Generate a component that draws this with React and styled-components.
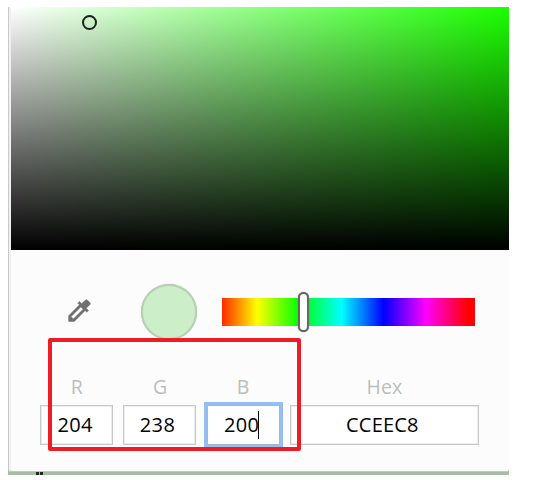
import React from 'react';
import styled, { createGlobalStyle, css } from 'styled-components';

const GlobalStyle = createGlobalStyle`
  * { box-sizing: border-box; }
  body { margin: 0; background: #fff; font-family: "Open Sans", "Noto Sans", sans-serif; }
`;

const Page = styled.main`
  position: relative;
  width: 554px;
  height: 480px;
  padding: 7px 0 0 8px;
  overflow: hidden;
`;

const Backdrop = styled.div`
  width: 501px;
  height: 468px;
  background: #a6bea4;
  overflow: hidden;
`;

const Panel = styled.section`
  width: 501px;
  height: 465px;
  display: flex;
  flex-direction: column;
  background: #fcfcfc;
  border-left: 1px solid #c9c9c9;
  border-bottom: 1px solid #c4c8c4;
  border-radius: 0 0 3px 3px;
  box-shadow: inset 2px 0 0 #f0f0f0;
`;

const Spectrum = styled.div`
  position: relative;
  height: 243px;
  margin-left: 2px;
  flex: none;
  background:
    linear-gradient(to top, #000, transparent),
    linear-gradient(to right, #fff, #1bff00);
`;

const Picker = styled.span`
  position: absolute;
  left: 71px;
  top: 8px;
  width: 15px;
  height: 15px;
  border: 2px solid #1c241b;
  border-radius: 50%;
`;

const Controls = styled.div`
  height: 56px;
  margin-top: 34px;
  padding-left: 55px;
  flex: none;
  display: flex;
  align-items: center;
`;

const Dropper = styled.svg`
  width: 29px;
  height: 29px;
  margin: -4px 0 0 1px;
  fill: #707070;
  stroke: #707070;
  stroke-width: 0.4;
`;

const Swatch = styled.div`
  width: 56px;
  height: 56px;
  margin-left: 47px;
  border: 2px solid #b5d2b2;
  border-radius: 50%;
  background: #cceec8;
  box-shadow: 0 0 1px #aaa;
`;

const Hue = styled.div`
  position: relative;
  width: 252.5px;
  height: 28px;
  margin-left: 25px;
  background: linear-gradient(to right, #ff2a00 0, #ff0 35px, #0f0 77px, #0ff 119.5px, #00f 161.5px, #f0f 204px, #f00 246px);
`;

const Thumb = styled.span`
  position: absolute;
  left: 76px;
  top: -6px;
  width: 11px;
  height: 40px;
  border: 2px solid #666;
  border-radius: 5.5px;
  background: #fff;
  box-shadow: 0 0 1px #666;
`;

const Fields = styled.div`
  display: grid;
  grid-template-columns: 73.3px 73px 73px 189px;
  column-gap: 10.2px;
  margin: 33px 0 0 31px;
`;

const Field = styled.label`
  display: flex;
  flex-direction: column;
  align-items: center;
`;

const Caption = styled.span`
  height: 32px;
  line-height: 28px;
  font-size: 19.5px;
  color: #bdbdbd;
`;

const Value = styled.span`
  width: 100%;
  height: 40px;
  display: flex;
  align-items: center;
  justify-content: center;
  padding-right: ${({ $shift }) => $shift || 0}px;
  border: 1px solid #c8c8c8;
  box-shadow: inset 0 0 0 1px #ececec;
  background: #fff;
  color: #000;
  font-size: 20px;
  line-height: 36px;
  padding-bottom: 1px;
  letter-spacing: ${({ $tracking }) => $tracking || 0}px;
  ${({ $focused }) => $focused && css`
    border-color: #a7b7cb;
    box-shadow: 0 0 0 3px #94bff0;
  `}
`;

const Caret = styled.i`
  width: 1px;
  height: 28px;
  margin-left: -1px;
  background: #000;
`;

const Highlight = styled.div`
  position: absolute;
  left: 48px;
  top: 338px;
  width: 253px;
  height: 113px;
  border: 4px solid #ee1c25;
  border-radius: 2px;
`;

const Tick = styled.div`
  width: 7px;
  height: 3px;
  margin-left: 28px;
  border-left: 3px solid #202820;
  border-right: 3px solid #202820;
`;

const fields = [
  { name: 'R', value: '204', shift: 3, tracking: 0.4 },
  { name: 'G', value: '238', shift: 5, tracking: 0.4 },
  { name: 'B', value: '200', shift: 3, tracking: 0.4, focused: true },
  { name: 'Hex', value: 'CCEEC8', shift: 4, tracking: 0.2 },
];

export default function App() {
  return (
    <Page>
      <GlobalStyle />
      <Backdrop>
        <Panel>
          <Spectrum><Picker /></Spectrum>
          <Controls>
            <Dropper viewBox="0 0 24 24">
              <path d="M20.71 5.63l-2.34-2.34a.996.996 0 0 0-1.41 0l-3.12 3.12-1.93-1.91-1.41 1.41 1.42 1.42L3 16.25V21h4.75l8.92-8.92 1.42 1.42 1.41-1.41-1.92-1.92 3.12-3.12c.4-.4.4-1.03.01-1.42zM6.92 19L5 17.08l8.06-8.06 1.92 1.92L6.92 19z" />
            </Dropper>
            <Swatch />
            <Hue><Thumb /></Hue>
          </Controls>
          <Fields>
            {fields.map((f) => (
              <Field key={f.name}>
                <Caption>{f.name}</Caption>
                <Value $focused={f.focused} $shift={f.shift} $tracking={f.tracking}>
                  {f.value}
                  {f.focused && <Caret />}
                </Value>
              </Field>
            ))}
          </Fields>
        </Panel>
        <Tick />
      </Backdrop>
      <Highlight />
    </Page>
  );
}
